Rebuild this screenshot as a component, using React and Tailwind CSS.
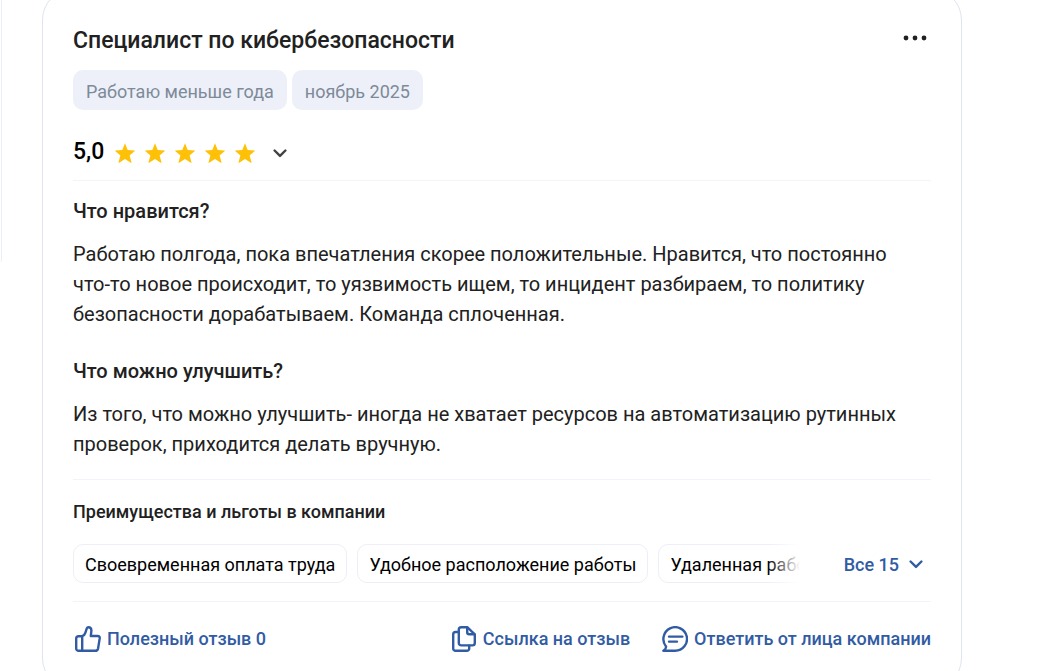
import React from 'react';

const TAGS = ['Работаю меньше года', 'ноябрь 2025'];

const BENEFITS = ['Своевременная оплата труда', 'Удобное расположение работы', 'Удаленная работа'];

const SECTIONS = [
  {
    title: 'Что нравится?',
    text: 'Работаю полгода, пока впечатления скорее положительные. Нравится, что постоянно что-то новое происходит, то уязвимость ищем, то инцидент разбираем, то политику безопасности дорабатываем. Команда сплоченная.',
  },
  {
    title: 'Что можно улучшить?',
    text: 'Из того, что можно улучшить- иногда не хватает ресурсов на автоматизацию рутинных проверок, приходится делать вручную.',
  },
];

const Star = () => (
  <svg viewBox="0 0 20 20" className="h-5 w-5" fill="#ffc107" aria-hidden="true">
    <path d="M10 0.3 L12.7 7 L19.6 7.4 Q20.3 7.6 19.8 8.1 L14.6 12.4 L16.5 19.2 Q16.5 20 15.8 19.7 L10 16 L4.2 19.7 Q3.5 20 3.5 19.2 L5.4 12.4 L0.2 8.1 Q-0.3 7.6 0.4 7.4 L7.3 7 Z" />
  </svg>
);

const Chevron = () => (
  <svg viewBox="0 0 14 9" className="h-[9px] w-[14px]" fill="none" stroke="currentColor" strokeWidth="2.4" strokeLinecap="round" strokeLinejoin="round" aria-hidden="true">
    <path d="M1.6 1.5 L7 6.9 L12.4 1.5" />
  </svg>
);

const Icon = ({ children }) => (
  <svg viewBox="0 0 26 26" className="h-[26px] w-[26px] shrink-0" fill="none" stroke="currentColor" strokeWidth="2.4" strokeLinecap="round" strokeLinejoin="round" aria-hidden="true">
    {children}
  </svg>
);

const ThumbIcon = () => (
  <Icon>
    <path d="M7.2 10.2 H3.6 A2.4 2.4 0 0 0 1.2 12.6 V22.4 A2.4 2.4 0 0 0 3.6 24.8 H20.2 Q22.6 24.8 23.1 22.4 L24.7 12.4 Q25 10 22.6 10 H15.8 L16.4 4.6 Q16.4 1.2 13.4 1.2 Q12.2 1.2 11.8 2.4 L10.4 6.6 Q9.6 9.4 7.2 10.2 Z M7.2 10.2 V24.6" />
  </Icon>
);

const CopyIcon = () => (
  <Icon>
    <path d="M10.2 1.2 H16.2 L23.8 8.4 V17 A2.4 2.4 0 0 1 21.4 19.4 H10.2 A2.4 2.4 0 0 1 7.8 17 V3.6 A2.4 2.4 0 0 1 10.2 1.2 Z" />
    <path d="M16.2 1.6 V6.2 A2 2 0 0 0 18.2 8.2 H23.4" />
    <path d="M7.6 6 H4.6 A2.4 2.4 0 0 0 2.2 8.4 V22.4 A2.4 2.4 0 0 0 4.6 24.8 H15.8 A2.4 2.4 0 0 0 18.2 22.4 V19.8" />
  </Icon>
);

const ReplyIcon = () => (
  <Icon>
    <path d="M1.4 24.8 H13.2 A11.8 11.8 0 1 0 4 20.4 Q4.4 22.6 1.4 24.8 Z" />
    <path d="M7 10.6 H20.4 M7 15.6 H15" />
  </Icon>
);

const Action = ({ icon, children }) => (
  <button type="button" className="flex items-center gap-1.5 whitespace-nowrap text-lg font-medium text-[#315ca3]">
    {icon}
    {children}
  </button>
);

export default function App() {
  return (
    <div className="flex h-screen items-start overflow-hidden bg-white font-['Roboto','Liberation_Sans',sans-serif] text-[#212121]">
      {/* Край боковой панели */}
      <aside className="mr-10 h-[262px] w-0.5 shrink-0 rounded-br-sm border-r border-[#eceef6]" />

      <article className="-mt-3 mr-[100px] min-w-0 flex-1 rounded-[32px] border border-[#dfe4ee] px-[30px] pt-9 pb-9">
        <header className="flex items-start justify-between">
          <h2 className="text-[23px] leading-8 font-medium">Специалист по кибербезопасности</h2>
          <button type="button" aria-label="Ещё" className="mr-1 flex h-[26px] items-center">
            <svg viewBox="0 0 24 6" className="h-1.5 w-6" fill="currentColor" aria-hidden="true">
              <circle cx="3" cy="3" r="2.4" />
              <circle cx="12" cy="3" r="2.4" />
              <circle cx="21" cy="3" r="2.4" />
            </svg>
          </button>
        </header>

        <div className="mt-[13px] flex gap-[5px]">
          {TAGS.map((tag) => (
            <span key={tag} className="flex h-10 items-center rounded-[10px] bg-[#edf0f8] px-[13px] pt-1 text-lg text-[#7d8a99]">
              {tag}
            </span>
          ))}
        </div>

        {/* Оценка */}
        <div className="mt-6 flex h-[47px] items-start border-b border-[#f2f4fa] pt-0.5">
          <div className="flex h-8 items-center">
            <span className="text-[23px] leading-8 font-medium text-black">5,0</span>
            <div className="ml-[11px] flex gap-2.5 pt-0.5">
              {[1, 2, 3, 4, 5].map((n) => (
                <Star key={n} />
              ))}
            </div>
            <button type="button" aria-label="Подробнее об оценке" className="ml-[18px] pt-0.5 text-[#424242]">
              <Chevron />
            </button>
          </div>
        </div>

        <div className="border-b border-[#f2f4fa] pt-[15px] pb-5">
          {SECTIONS.map((section) => (
            <section key={section.title} className="mb-[27px] last:mb-0">
              <h3 className="text-xl leading-[30px] font-medium">{section.title}</h3>
              <p className="mt-[13px] pr-4 text-xl leading-[30px]">{section.text}</p>
            </section>
          ))}
        </div>

        {/* Льготы */}
        <div className="border-b border-[#f2f4fa] pt-[18px] pb-[18px]">
          <h3 className="text-lg font-medium">Преимущества и льготы в компании</h3>
          <div className="mt-[18px] flex items-center">
            <div className="relative min-w-0 flex-1 overflow-hidden">
              <ul className="flex gap-2.5">
                {BENEFITS.map((benefit) => (
                  <li key={benefit} className="flex h-[39px] shrink-0 items-center rounded-[10px] border border-[#edeff8] px-[11px] pt-0.5 text-lg text-black">
                    {benefit}
                  </li>
                ))}
              </ul>
              <div className="absolute inset-y-0 right-0 w-8 bg-linear-to-r from-transparent to-white" />
            </div>
            <button type="button" className="mr-2 ml-11 flex items-center gap-2.5 pt-0.5 text-lg font-medium text-[#315ca3]">
              Все 15
              <Chevron />
            </button>
          </div>
        </div>

        <footer className="flex items-center justify-between pt-[23px] pl-0.5">
          <Action icon={<ThumbIcon />}>Полезный отзыв 0</Action>
          <div className="flex gap-8">
            <Action icon={<CopyIcon />}>Ссылка на отзыв</Action>
            <Action icon={<ReplyIcon />}>Ответить от лица компании</Action>
          </div>
        </footer>
      </article>
    </div>
  );
}
